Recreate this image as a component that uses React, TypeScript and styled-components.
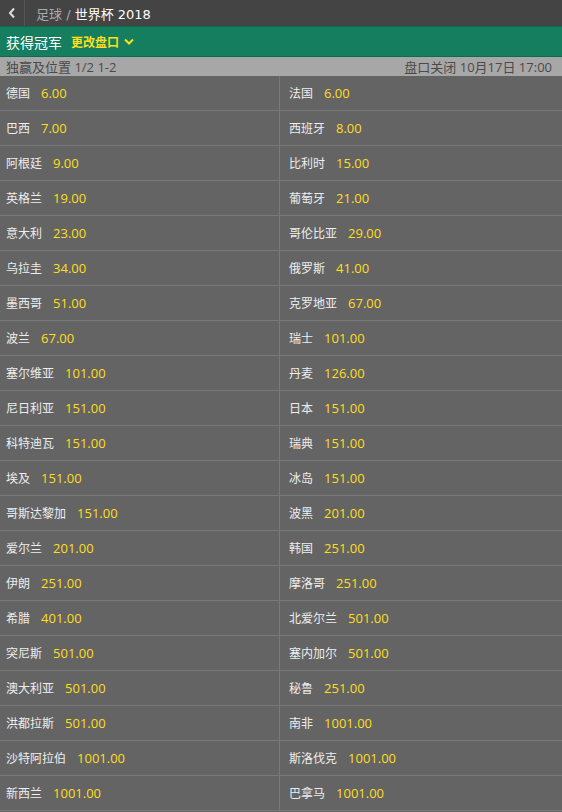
import styled, { createGlobalStyle } from "styled-components";

const GlobalStyle = createGlobalStyle`
  body {
    margin: 0;
    background: #646464;
    font-family: "Open Sans", "Noto Sans CJK SC", sans-serif;
  }
`;

const odds: [string, string][] = [
  ["德国", "6.00"], ["法国", "6.00"],
  ["巴西", "7.00"], ["西班牙", "8.00"],
  ["阿根廷", "9.00"], ["比利时", "15.00"],
  ["英格兰", "19.00"], ["葡萄牙", "21.00"],
  ["意大利", "23.00"], ["哥伦比亚", "29.00"],
  ["乌拉圭", "34.00"], ["俄罗斯", "41.00"],
  ["墨西哥", "51.00"], ["克罗地亚", "67.00"],
  ["波兰", "67.00"], ["瑞士", "101.00"],
  ["塞尔维亚", "101.00"], ["丹麦", "126.00"],
  ["尼日利亚", "151.00"], ["日本", "151.00"],
  ["科特迪瓦", "151.00"], ["瑞典", "151.00"],
  ["埃及", "151.00"], ["冰岛", "151.00"],
  ["哥斯达黎加", "151.00"], ["波黑", "201.00"],
  ["爱尔兰", "201.00"], ["韩国", "251.00"],
  ["伊朗", "251.00"], ["摩洛哥", "251.00"],
  ["希腊", "401.00"], ["北爱尔兰", "501.00"],
  ["突尼斯", "501.00"], ["塞内加尔", "501.00"],
  ["澳大利亚", "501.00"], ["秘鲁", "251.00"],
  ["洪都拉斯", "501.00"], ["南非", "1001.00"],
  ["沙特阿拉伯", "1001.00"], ["斯洛伐克", "1001.00"],
  ["新西兰", "1001.00"], ["巴拿马", "1001.00"],
];

export default function App() {
  return (
    <Page>
      <GlobalStyle />
      <TopBar>
        <BackBtn>
          <svg width="8" height="12" viewBox="0 0 8 12">
            <path d="M6 1.5 L2 6 L6 10.5" fill="none" stroke="#ddd" strokeWidth="2" />
          </svg>
        </BackBtn>
        <Crumb>
          <span className="muted">足球 / </span>
          <span className="cur">世界杯 2018</span>
        </Crumb>
      </TopBar>
      <MarketBar>
        <span className="title">获得冠军</span>
        <ChangeLink>
          更改盘口
          <svg width="10" height="7" viewBox="0 0 10 7">
            <path d="M1 1.5 L5 5.5 L9 1.5" fill="none" stroke="#ffdf1b" strokeWidth="2" />
          </svg>
        </ChangeLink>
      </MarketBar>
      <InfoBar>
        <span>独赢及位置 1/2 1-2</span>
        <span>盘口关闭 10月17日 17:00</span>
      </InfoBar>
      <Grid>
        {odds.map(([name, price]) => (
          <Cell key={name}>
            <span className="name">{name}</span>
            <span className="price">{price}</span>
          </Cell>
        ))}
      </Grid>
    </Page>
  );
}

const Page = styled.div`
  width: 562px;
  min-height: 812px;
  background: #646464;
`;

const TopBar = styled.div`
  display: flex;
  align-items: center;
  height: 26px;
  background: #444;
`;

const BackBtn = styled.div`
  display: flex;
  align-items: center;
  justify-content: center;
  width: 25px;
  height: 26px;
  border-right: 1px solid #555;
  box-sizing: border-box;
`;

const Crumb = styled.div`
  padding-left: 11px;
  font-family: "DejaVu Sans", "Noto Sans CJK SC", sans-serif;
  font-size: 13px;
  .muted { color: #aaa; }
  .cur { color: #fff; }
`;

const MarketBar = styled.div`
  display: flex;
  align-items: center;
  gap: 9px;
  height: 29px;
  padding: 0 6px;
  background: #147e5e;
  border-top: 1px solid #0f6a4e;
  border-bottom: 1px solid #0f6a4e;
  .title {
    color: #fff;
    font-size: 14px;
  }
`;

const ChangeLink = styled.span`
  display: flex;
  align-items: center;
  gap: 5px;
  color: #ffdf1b;
  font-size: 12px;
  font-weight: bold;
`;

const InfoBar = styled.div`
  display: flex;
  justify-content: space-between;
  align-items: center;
  height: 19px;
  padding: 0 10px 0 6px;
  background: #a7a7a7;
  color: #4a4a4a;
  font-size: 13px;
`;

const Grid = styled.div`
  display: grid;
  grid-template-columns: 280px 282px;
`;

const Cell = styled.div`
  display: flex;
  align-items: center;
  gap: 11px;
  height: 35px;
  padding-left: 6px;
  box-sizing: border-box;
  border-bottom: 1px solid #787878;
  &:nth-child(odd) {
    border-right: 1px solid #787878;
  }
  &:nth-child(even) {
    padding-left: 9px;
  }
  .name {
    color: #eee;
    font-size: 12px;
  }
  .price {
    color: #ffdf1b;
    font-size: 13px;
  }
`;
